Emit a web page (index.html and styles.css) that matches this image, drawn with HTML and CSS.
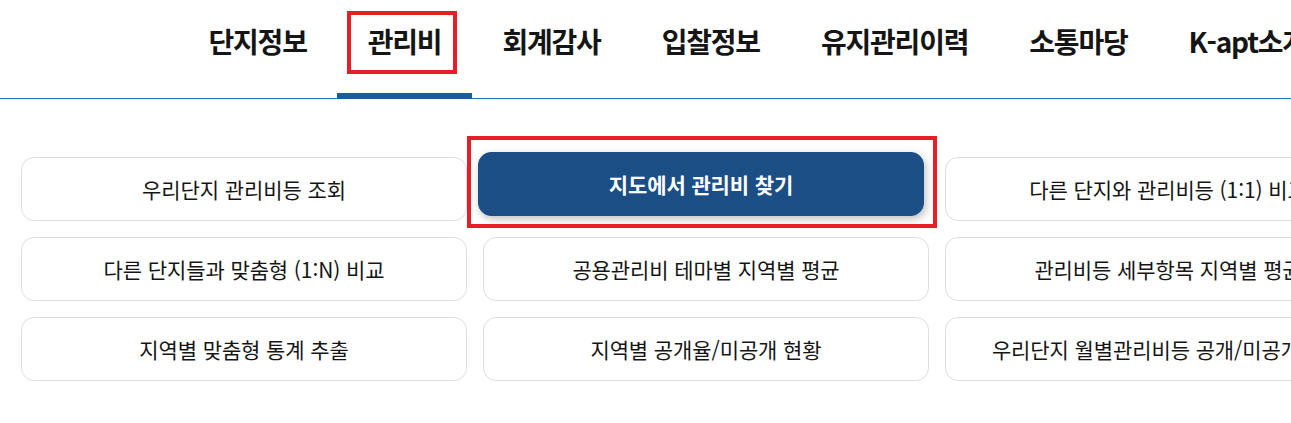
FILE: index.html
```html
<!DOCTYPE html>
<html lang="ko">
<head>
    <meta charset="UTF-8">
    <title>관리비</title>
    <link rel="stylesheet" href="styles.css">
</head>
<body>
<div class="header">
    <ul class="gnb">
        <li><a href="#">단지정보</a></li>
        <li class="on"><a href="#"><span class="mark">관리비</span></a></li>
        <li><a href="#">회계감사</a></li>
        <li><a href="#">입찰정보</a></li>
        <li><a href="#">유지관리이력</a></li>
        <li><a href="#">소통마당</a></li>
        <li><a href="#">K-apt소개</a></li>
    </ul>
</div>

<div class="menu">
    <a class="card" href="#">우리단지 관리비등 조회</a>
    <a class="card active" href="#">지도에서 관리비 찾기</a>
    <a class="card" href="#">다른 단지와 관리비등 (1:1) 비교</a>
    <a class="card" href="#">다른 단지들과 맞춤형 (1:N) 비교</a>
    <a class="card" href="#">공용관리비 테마별 지역별 평균</a>
    <a class="card" href="#">관리비등 세부항목 지역별 평균</a>
    <a class="card" href="#">지역별 맞춤형 통계 추출</a>
    <a class="card" href="#">지역별 공개율/미공개 현황</a>
    <a class="card" href="#">우리단지 월별관리비등 공개/미공개 현황</a>
</div>
</body>
</html>
```

FILE: styles.css
```css
html, body {
    margin: 0;
    padding: 0;
    overflow: hidden;
    background: #fff;
    font-family: "Noto Sans CJK KR", "Noto Sans", sans-serif;
    color: #151515;
}
a {
    color: inherit;
    text-decoration: none;
}

/* 상단 메뉴 */
.header {
    height: 98px;
    border-bottom: 1px solid #1f80b3;
}
.gnb {
    list-style: none;
    margin: 0;
    padding: 0 0 0 178px;
    display: flex;
    white-space: nowrap;
}
.gnb li {
    position: relative;
    height: 98px;
}
.gnb li a {
    display: block;
    padding: 20px 30.5px 0;
    font-size: 28px;
    font-weight: 700;
    letter-spacing: -1.2px;
    line-height: 42px;
}
.gnb li.on::after {
    content: "";
    position: absolute;
    left: 0;
    right: 0;
    bottom: -1px;
    height: 6px;
    background: #195d9c;
}
.mark {
    position: relative;
}
.mark::before {
    content: "";
    position: absolute;
    left: -21px;
    right: -16px;
    top: -10px;
    bottom: -13px;
    border: 4px solid #e61e27;
}

/* 관리비 메뉴 */
.menu {
    display: grid;
    grid-template-columns: repeat(3, 446px);
    grid-auto-rows: 64px;
    gap: 16px;
    padding: 58px 0 0 21px;
}
.card {
    position: relative;
    display: flex;
    align-items: center;
    justify-content: center;
    border: 1px solid #dedede;
    border-radius: 13px;
    font-size: 21px;
    letter-spacing: -0.1px;
    white-space: nowrap;
}
.card.active {
    background: #1b4e85;
    border-color: #1b4e85;
    color: #fff;
    font-weight: 700;
    transform: translate(-5px, -5px);
    box-shadow: 2px 3px 8px rgba(0, 0, 0, 0.25);
}
.card.active::before {
    content: "";
    position: absolute;
    left: -12px;
    right: -14px;
    top: -17px;
    bottom: -13px;
    border: 4px solid #e61e27;
}
```
